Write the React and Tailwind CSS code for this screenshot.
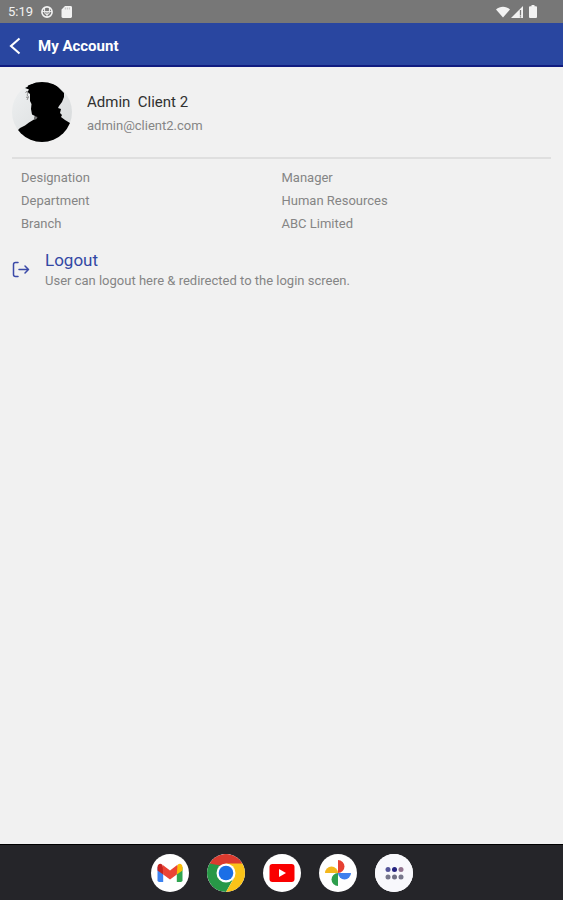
import React from "react";

const details = [
  { label: "Designation", value: "Manager" },
  { label: "Department", value: "Human Resources" },
  { label: "Branch", value: "ABC Limited" },
];

const StatusBar = () => (
  <div className="flex h-[23px] items-center justify-between bg-[#777777] pr-[26px] pl-2 text-[#f2f2f2]">
    <div className="flex items-center gap-2">
      <span className="text-[13px] leading-4">5:19</span>
      <svg className="size-3" viewBox="0 0 12 12" fill="none" stroke="currentColor">
        <circle cx="6" cy="6" r="5.1" strokeWidth="1.6" />
        <path d="M1 5.6h10M6 5.600V11M3.600 2v3.500M8.400 2v3.500M3.600 5.600q0 3 2.400 3t2.400-3" strokeWidth="1" />
      </svg>
      <svg className="h-3 w-[11px]" viewBox="0 0 11 12" fill="currentColor">
        <path d="M4 0h5.6c.8 0 1.4.6 1.4 1.4v9.2c0 .8-.6 1.4-1.4 1.4H1.9C1.100 12 .5 11.400.5 10.600V3.600z" />
        <path d="M4.300 1.500v2M6.300 1.500v2M8.300 1.500v2" stroke="#aaaaaa" strokeWidth=".7" />
      </svg>
    </div>
    <div className="flex items-center">
      <svg className="h-3 w-[14px]" viewBox="0 0 15 12" fill="currentColor">
        <path d="M0 3.300C4.300-.6 10.700-.6 15 3.300L7.500 12z" />
      </svg>
      <svg className="ml-px h-3 w-3" viewBox="0 0 12 12" fill="currentColor">
        <path d="M12 0v12H0z" />
        <path d="M9.500 4v5.500M9.500 10.300v1.200" stroke="#777777" strokeWidth="1.300" />
      </svg>
      <svg className="ml-[6px] h-[13px] w-2" viewBox="0 0 8 13" fill="currentColor">
        <path d="M2.500 0h3v1.200H7q1 0 1 1V12q0 1-1 1H1q-1 0-1-1V2.200q0-1 1-1h1.500z" />
      </svg>
    </div>
  </div>
);

const Header = () => (
  <header className="flex h-11 items-center gap-4 border-b-2 border-[#101c80] bg-[#2946a0] px-2 pt-[3px] text-white">
    <button type="button" aria-label="Back">
      <svg className="h-[18px] w-[14px]" viewBox="0 0 14 18" fill="none" stroke="currentColor" strokeWidth="2.100">
        <path d="M11.500 1.500 3 9l8.500 7.500" />
      </svg>
    </button>
    <h1 className="text-[15px] leading-5 font-bold">My Account</h1>
  </header>
);

const Avatar = () => (
  <svg className="size-[60px] shrink-0" viewBox="0 0 60 60" role="img" aria-label="Admin Client 2">
    <defs>
      <clipPath id="avatar">
        <circle cx="30" cy="30" r="30" />
      </clipPath>
      <linearGradient id="sky" x1="0" y1="0" x2="1" y2="1">
        <stop offset="0" stopColor="#eff1f2" />
        <stop offset="1" stopColor="#d5d8d9" />
      </linearGradient>
    </defs>
    <g clipPath="url(#avatar)">
      <path d="M0 0h60v60H0z" fill="url(#sky)" />
      <path
        d="M13 6 16 4.500 15.500 3 20 2 25-1 36-1 44 3 48 7 52 11 52 15 50 20 47 24 46 26 49 27 48 31 50 33 49 35 53 38 58 41 58 60H4L5 49 8 46 13 43.500 17 40.500 22 37.500 23 34 20 32.500 19 27 19.500 22 18 19 18 12 15.500 10 17 7.500z"
        fill="#000"
      />
      <path d="m13.500 11 1.500-2 1 2-1 2 1.500 2-1.500 3M14 15l2 1" fill="none" stroke="#777" strokeWidth=".8" />
      <path d="m22.500 34 3 1-1 2-2.500 1z" fill="#777" />
    </g>
  </svg>
);

const DockButton = ({ label, children }) => (
  <button type="button" aria-label={label} className="size-[38px] overflow-hidden rounded-full bg-white">
    <svg className="size-[38px]" viewBox="0 0 38 38">
      {children}
    </svg>
  </button>
);

const Dock = () => (
  <nav className="flex h-14 items-center justify-center gap-[18px] border-t border-black bg-[#252529]">
    <DockButton label="Gmail">
      <path d="M6.500 13v13.200q0 1.800 1.800 1.800h3.900V16.500z" fill="#3c82f0" />
      <path d="M31.500 13v13.200q0 1.800-1.800 1.800h-3.900V16.500z" fill="#30a550" />
      <path d="M12.200 13.500v7L6.500 16.500V13c0-2.900 2.500-4.200 4.600-2.600z" fill="#c5221f" />
      <path d="M25.800 13.500v7l5.700-4V13c0-2.900-2.500-4.200-4.600-2.600z" fill="#fbbc04" />
      <path d="m11.500 10.700 7.500 5.800 7.500-5.800-.7 9.800L19 25.500l-6.800-5z" fill="#ea4335" />
    </DockButton>
    <DockButton label="Chrome">
      <path d="M19 19 2.500 9.500A19 19 0 0 1 35.500 9.500z" fill="#dc3b2f" />
      <path d="M19 19 2.500 9.500A19 19 0 0 0 19 38l8-14.500z" fill="#289847" />
      <path d="M19 9.500h16.500A19 19 0 0 1 19 38l8.200-14.200z" fill="#fac318" />
      <path d="M2.500 9.500 11 24l5-12z" fill="#289847" />
      <circle cx="19" cy="19" r="9.500" fill="#fff" />
      <circle cx="19" cy="19" r="7.300" fill="#1b6fe6" />
    </DockButton>
    <DockButton label="YouTube">
      <rect x="6.500" y="10" width="25" height="18" rx="3" fill="#fa0000" />
      <path d="M16 15v8l7-4z" fill="#fff" />
    </DockButton>
    <DockButton label="Photos">
      <path d="M19 6a6.500 6.500 0 0 1 0 13z" fill="#e64132" />
      <path d="M32 19a6.500 6.500 0 0 1-13 0z" fill="#3f80ed" />
      <path d="M19 32a6.500 6.500 0 0 1 0-13z" fill="#2e9f4d" />
      <path d="M6 19a6.500 6.500 0 0 1 13 0z" fill="#f4b71c" />
    </DockButton>
    <DockButton label="All apps">
      <path d="M0 0h38v38H0z" fill="#f8f8fc" />
      <circle cx="13" cy="15.500" r="2.500" fill="#55569a" />
      <circle cx="19.500" cy="15.500" r="2.500" fill="#25247f" />
      <circle cx="26" cy="15.500" r="2.500" fill="#92738e" />
      <circle cx="13" cy="23" r="2.500" fill="#77778b" />
      <circle cx="19.500" cy="23" r="2.500" fill="#707084" />
      <circle cx="26" cy="23" r="2.500" fill="#77778b" />
    </DockButton>
  </nav>
);

export default function App() {
  return (
    <div className="flex min-h-screen flex-col bg-[#f1f1f1] font-[Roboto,sans-serif] text-[13px] text-[#858585]">
      <StatusBar />
      <Header />

      <main className="flex-1 px-3 pt-[15px]">
        {/* Profile */}
        <section className="flex items-center gap-[15px] border-b-2 border-[#dfdfdf] pb-[15px]">
          <Avatar />
          <div className="pt-[2px]">
            <h2 className="text-[15px] leading-6 whitespace-pre text-[#303030]">{"Admin  Client 2"}</h2>
            <p className="leading-[23px]">admin@client2.com</p>
          </div>
        </section>

        {/* Details */}
        <dl className="px-[9px] pt-[7px]">
          {details.map((item) => (
            <div key={item.label} className="grid grid-cols-2 leading-[23px]">
              <dt>{item.label}</dt>
              <dd>{item.value}</dd>
            </div>
          ))}
        </dl>

        {/* Logout */}
        <button type="button" className="mt-[14px] flex w-full items-center gap-[15px] text-left">
          <svg
            className="h-[18px] w-[18px] shrink-0"
            viewBox="0 0 18 18"
            fill="none"
            stroke="#3b4aa8"
            strokeWidth="1.500"
            strokeLinecap="round"
            strokeLinejoin="round"
          >
            <path d="M6 1.500H3.500q-2 0-2 2v10q0 2 2 2H6M7 8.500h9.500M13 5l3.500 3.500L13 12" />
          </svg>
          <span>
            <span className="block text-[17px] leading-[22px] text-[#3348a4]">Logout</span>
            <span className="block leading-5">User can logout here &amp; redirected to the login screen.</span>
          </span>
        </button>
      </main>

      <Dock />
    </div>
  );
}
